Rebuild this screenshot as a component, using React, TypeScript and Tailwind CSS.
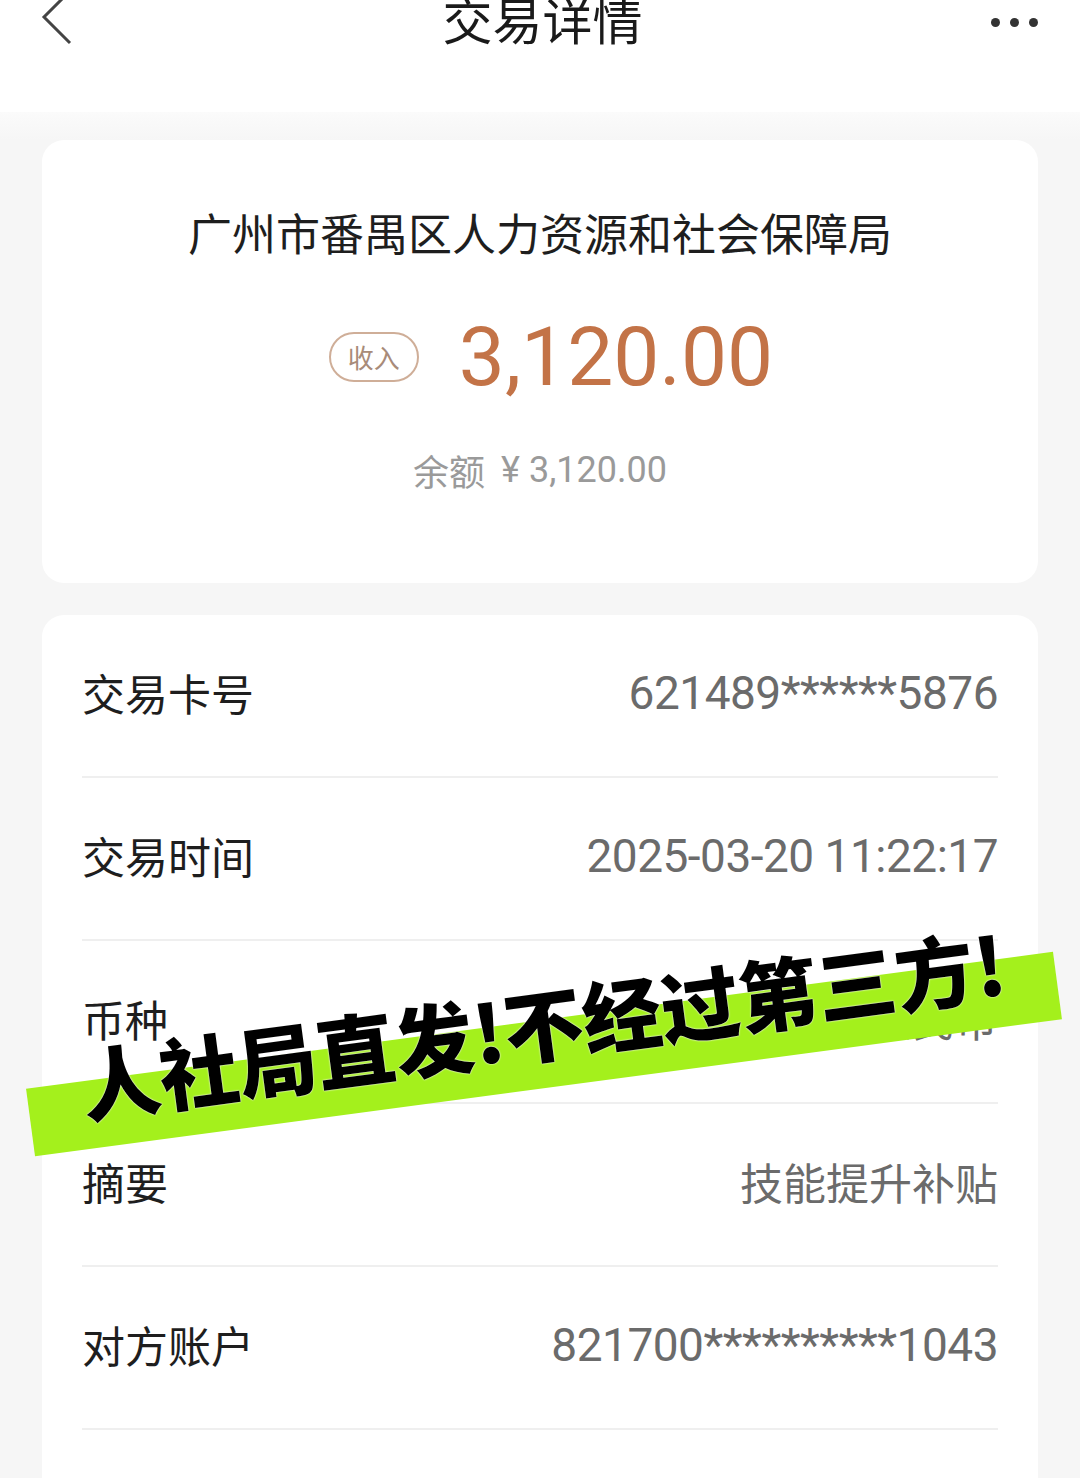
import React from "react";

const cjk = { fontFamily: '"Noto Sans CJK SC", "Noto Sans", sans-serif' };
const num = { fontFamily: 'Roboto, "Noto Sans CJK SC", sans-serif' };

function Row({ label, value, cjkValue }: { label: string; value: string; cjkValue?: boolean }) {
  return (
    <div className="flex h-[163px] items-center justify-between border-b-2 border-[#efefef]">
      <span className="-mt-[6px] text-[43px] leading-none text-[#1e1e1e]" style={cjk}>
        {label}
      </span>
      <span
        className={
          cjkValue
            ? "-mt-[6px] text-[43px] leading-none text-[#6b6b6b]"
            : "-mt-[6px] text-[46px] leading-none tracking-[-0.5px] text-[#6b6b6b]"
        }
        style={cjkValue ? cjk : num}
      >
        {value}
      </span>
    </div>
  );
}

export default function App() {
  return (
    <div className="relative h-[1478px] w-[1080px] overflow-hidden bg-[#f6f6f6]" style={cjk}>
      {/* header */}
      <div className="relative h-[112px] bg-white">
        <div className="flex h-[44px] items-center justify-between px-[40px]">
          <svg width="34" height="58" viewBox="0 0 34 58" className="-mt-[8px]">
            <path d="M30 2 L4 28 L30 54" fill="none" stroke="#444" strokeWidth="3" />
          </svg>
          <span className="-mt-[8px] ml-[20px] text-[50px] leading-none text-[#1a1a1a]">交易详情</span>
          <div className="flex items-center gap-[10px] pr-[2px]">
            <span className="h-[9px] w-[9px] rounded-full bg-[#333]" />
            <span className="h-[9px] w-[9px] rounded-full bg-[#333]" />
            <span className="h-[9px] w-[9px] rounded-full bg-[#333]" />
          </div>
        </div>
      </div>

      <div className="h-[28px] bg-gradient-to-b from-[#fbfbfb] to-[#f6f6f6]" />

      {/* summary card */}
      <div className="mx-[42px] flex h-[443px] flex-col items-center rounded-[22px] bg-white">
        <div className="mt-[70px] text-[44px] leading-none text-[#1e1e1e]">广州市番禺区人力资源和社会保障局</div>
        <div className="ml-[22px] mt-[62px] flex items-center">
          <span className="flex h-[50px] w-[90px] items-center justify-center rounded-full border-2 border-[#cfae98] text-[26px] leading-none text-[#a88b79]">
            收入
          </span>
          <span className="ml-[40px] text-[82px] leading-none text-[#c37347]" style={num}>
            3,120.00
          </span>
        </div>
        <div className="mt-[54px] flex items-center text-[36px] leading-none text-[#9a9a9a]">
          <span>余额</span>
          <span className="ml-[16px]" style={num}>¥ 3,120.00</span>
        </div>
      </div>

      {/* detail card */}
      <div className="mx-[42px] mt-[32px] rounded-t-[22px] bg-white px-[40px] pb-[80px]">
        <Row label="交易卡号" value="621489******5876" />
        <Row label="交易时间" value="2025-03-20 11:22:17" />
        <Row label="币种" value="人民币" cjkValue />
        <Row label="摘要" value="技能提升补贴" cjkValue />
        <Row label="对方账户" value="821700**********1043" />
      </div>

      {/* green banner overlay */}
      <div className="absolute left-[26px] top-[1020px] h-[68px] w-[1036px] -rotate-[7.6deg] bg-[#a4f01c]">
        <div
          className="absolute left-[6px] right-0 top-[-38px] flex justify-center whitespace-nowrap text-[79px] font-black leading-none text-black"
          style={{ ...cjk, textShadow: "0 0 2px #fff, 0 0 1px #fff" }}
        >
          人社局直发!不经过第三方!
        </div>
      </div>
    </div>
  );
}
